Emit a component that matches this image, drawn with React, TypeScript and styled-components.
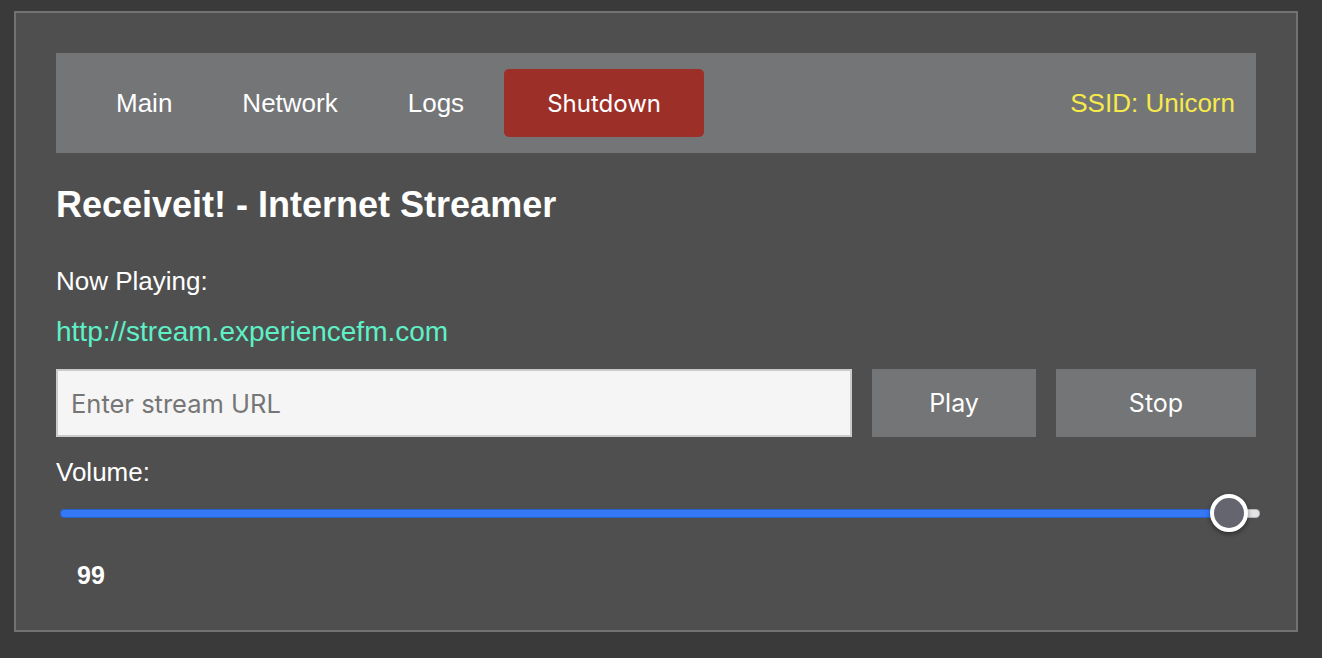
import React, { useState } from 'react';
import styled, { createGlobalStyle } from 'styled-components';

// ─── Global ───────────────────────────────────────────────────────────────────
const GlobalStyle = createGlobalStyle`
  html, body {
    margin: 0;
    padding: 0;
    background: #3a3a3a;
  }
  body {
    font-family: 'Liberation Sans', Arial, sans-serif;
    color: #ffffff;
  }
  * { box-sizing: border-box; }
`;

// ─── Layout ───────────────────────────────────────────────────────────────────
const Panel = styled.main`
  margin: 11px 0 0 14px;
  width: 1284px;
  padding: 40px;
  background: #4f4f4f;
  border: 2px solid #727272;
  display: flex;
  flex-direction: column;
`;

// ─── Nav ──────────────────────────────────────────────────────────────────────
const NavBar = styled.nav`
  height: 100px;
  background: #747577;
  display: flex;
  align-items: center;
  padding: 2px 21px 0 25px;
`;

const NavLink = styled.a`
  padding: 0 35px;
  font-size: 26px;
  line-height: 1.15;
  color: #ffffff;
  text-decoration: none;
  cursor: pointer;
`;

const ShutdownButton = styled.button`
  margin: -2px 0 0 5px;
  width: 200px;
  height: 68px;
  border: none;
  border-radius: 5px;
  background: #9d2f29;
  color: #ffffff;
  font-family: Inter, 'Noto Sans', sans-serif;
  font-size: 24px;
  cursor: pointer;
`;

const Ssid = styled.span`
  margin-left: auto;
  font-size: 26px;
  line-height: 1.15;
  color: #f6ea4a;
`;

// ─── Text ─────────────────────────────────────────────────────────────────────
const Title = styled.h2`
  margin: 31px 0 0;
  font-size: 36px;
  line-height: 1.15;
  font-weight: 700;
`;

const Label = styled.p<{ $top: number }>`
  margin: ${p => p.$top}px 0 0;
  font-size: 26px;
  line-height: 1.15;
`;

const StreamUrl = styled.p`
  margin: 19px 0 0;
  font-size: 28px;
  line-height: 1.15;
  color: #5ef0c6;
`;

// ─── Controls ─────────────────────────────────────────────────────────────────
const ControlRow = styled.div`
  margin-top: 21px;
  display: flex;
  gap: 20px;
  height: 68px;
`;

const UrlInput = styled.input`
  flex: 1;
  height: 68px;
  padding: 0 13px;
  border: 2px solid #cbcbcb;
  background: #f5f5f5;
  font-family: Inter, 'Noto Sans', sans-serif;
  font-size: 25.5px;
  color: #222;
  outline: none;

  &::placeholder { color: #767676; }
`;

const ActionButton = styled.button<{ $width: number }>`
  width: ${p => p.$width}px;
  height: 68px;
  border: none;
  background: #747577;
  color: #ffffff;
  font-family: Inter, 'Noto Sans', sans-serif;
  font-size: 25px;
  cursor: pointer;
`;

const VolumeSlider = styled.input`
  -webkit-appearance: none;
  appearance: none;
  margin: 5px 0 0 4px;
  width: 1200px;
  height: 40px;
  background: transparent;

  &::-webkit-slider-runnable-track {
    height: 9px;
    border-radius: 5px;
    background: var(--fill);
    box-shadow: inset 0 0 0 1px rgba(0, 0, 0, 0.2);
  }

  &::-webkit-slider-thumb {
    -webkit-appearance: none;
    width: 38px;
    height: 38px;
    margin-top: -14.5px;
    border-radius: 50%;
    background: #65656f;
    border: 4px solid #ffffff;
    box-shadow: 0 2px 5px rgba(0, 0, 0, 0.45);
  }
`;

const VolumeValue = styled.p`
  margin: 28px 0 0 21px;
  font-size: 25px;
  line-height: 1.15;
  font-weight: 700;
`;

// ─── Component ────────────────────────────────────────────────────────────────
export default function App() {
  const [volume, setVolume] = useState(99);
  const [url, setUrl] = useState('');

  // blue fill runs up to the thumb centre
  const pct = ((19 + (volume / 100) * 1162) / 1200) * 100;
  const fill = `linear-gradient(to right, #3478f6 0%, #3478f6 ${pct}%, #e4e4e6 ${pct}%, #e4e4e6 100%)`;

  return (
    <>
      <GlobalStyle />
      <Panel>
        <NavBar>
          <NavLink>Main</NavLink>
          <NavLink>Network</NavLink>
          <NavLink>Logs</NavLink>
          <ShutdownButton>Shutdown</ShutdownButton>
          <Ssid>SSID: Unicorn</Ssid>
        </NavBar>

        <Title>Receiveit! - Internet Streamer</Title>

        <Label $top={42}>Now Playing:</Label>
        <StreamUrl>http://stream.experiencefm.com</StreamUrl>

        <ControlRow>
          <UrlInput
            placeholder="Enter stream URL"
            value={url}
            onChange={e => setUrl(e.target.value)}
          />
          <ActionButton $width={164}>Play</ActionButton>
          <ActionButton $width={200}>Stop</ActionButton>
        </ControlRow>

        <Label $top={21}>Volume:</Label>
        <VolumeSlider
          type="range"
          min={0}
          max={100}
          value={volume}
          onChange={e => setVolume(Number(e.target.value))}
          style={{ ['--fill' as string]: fill } as React.CSSProperties}
        />
        <VolumeValue>{volume}</VolumeValue>
      </Panel>
    </>
  );
}
